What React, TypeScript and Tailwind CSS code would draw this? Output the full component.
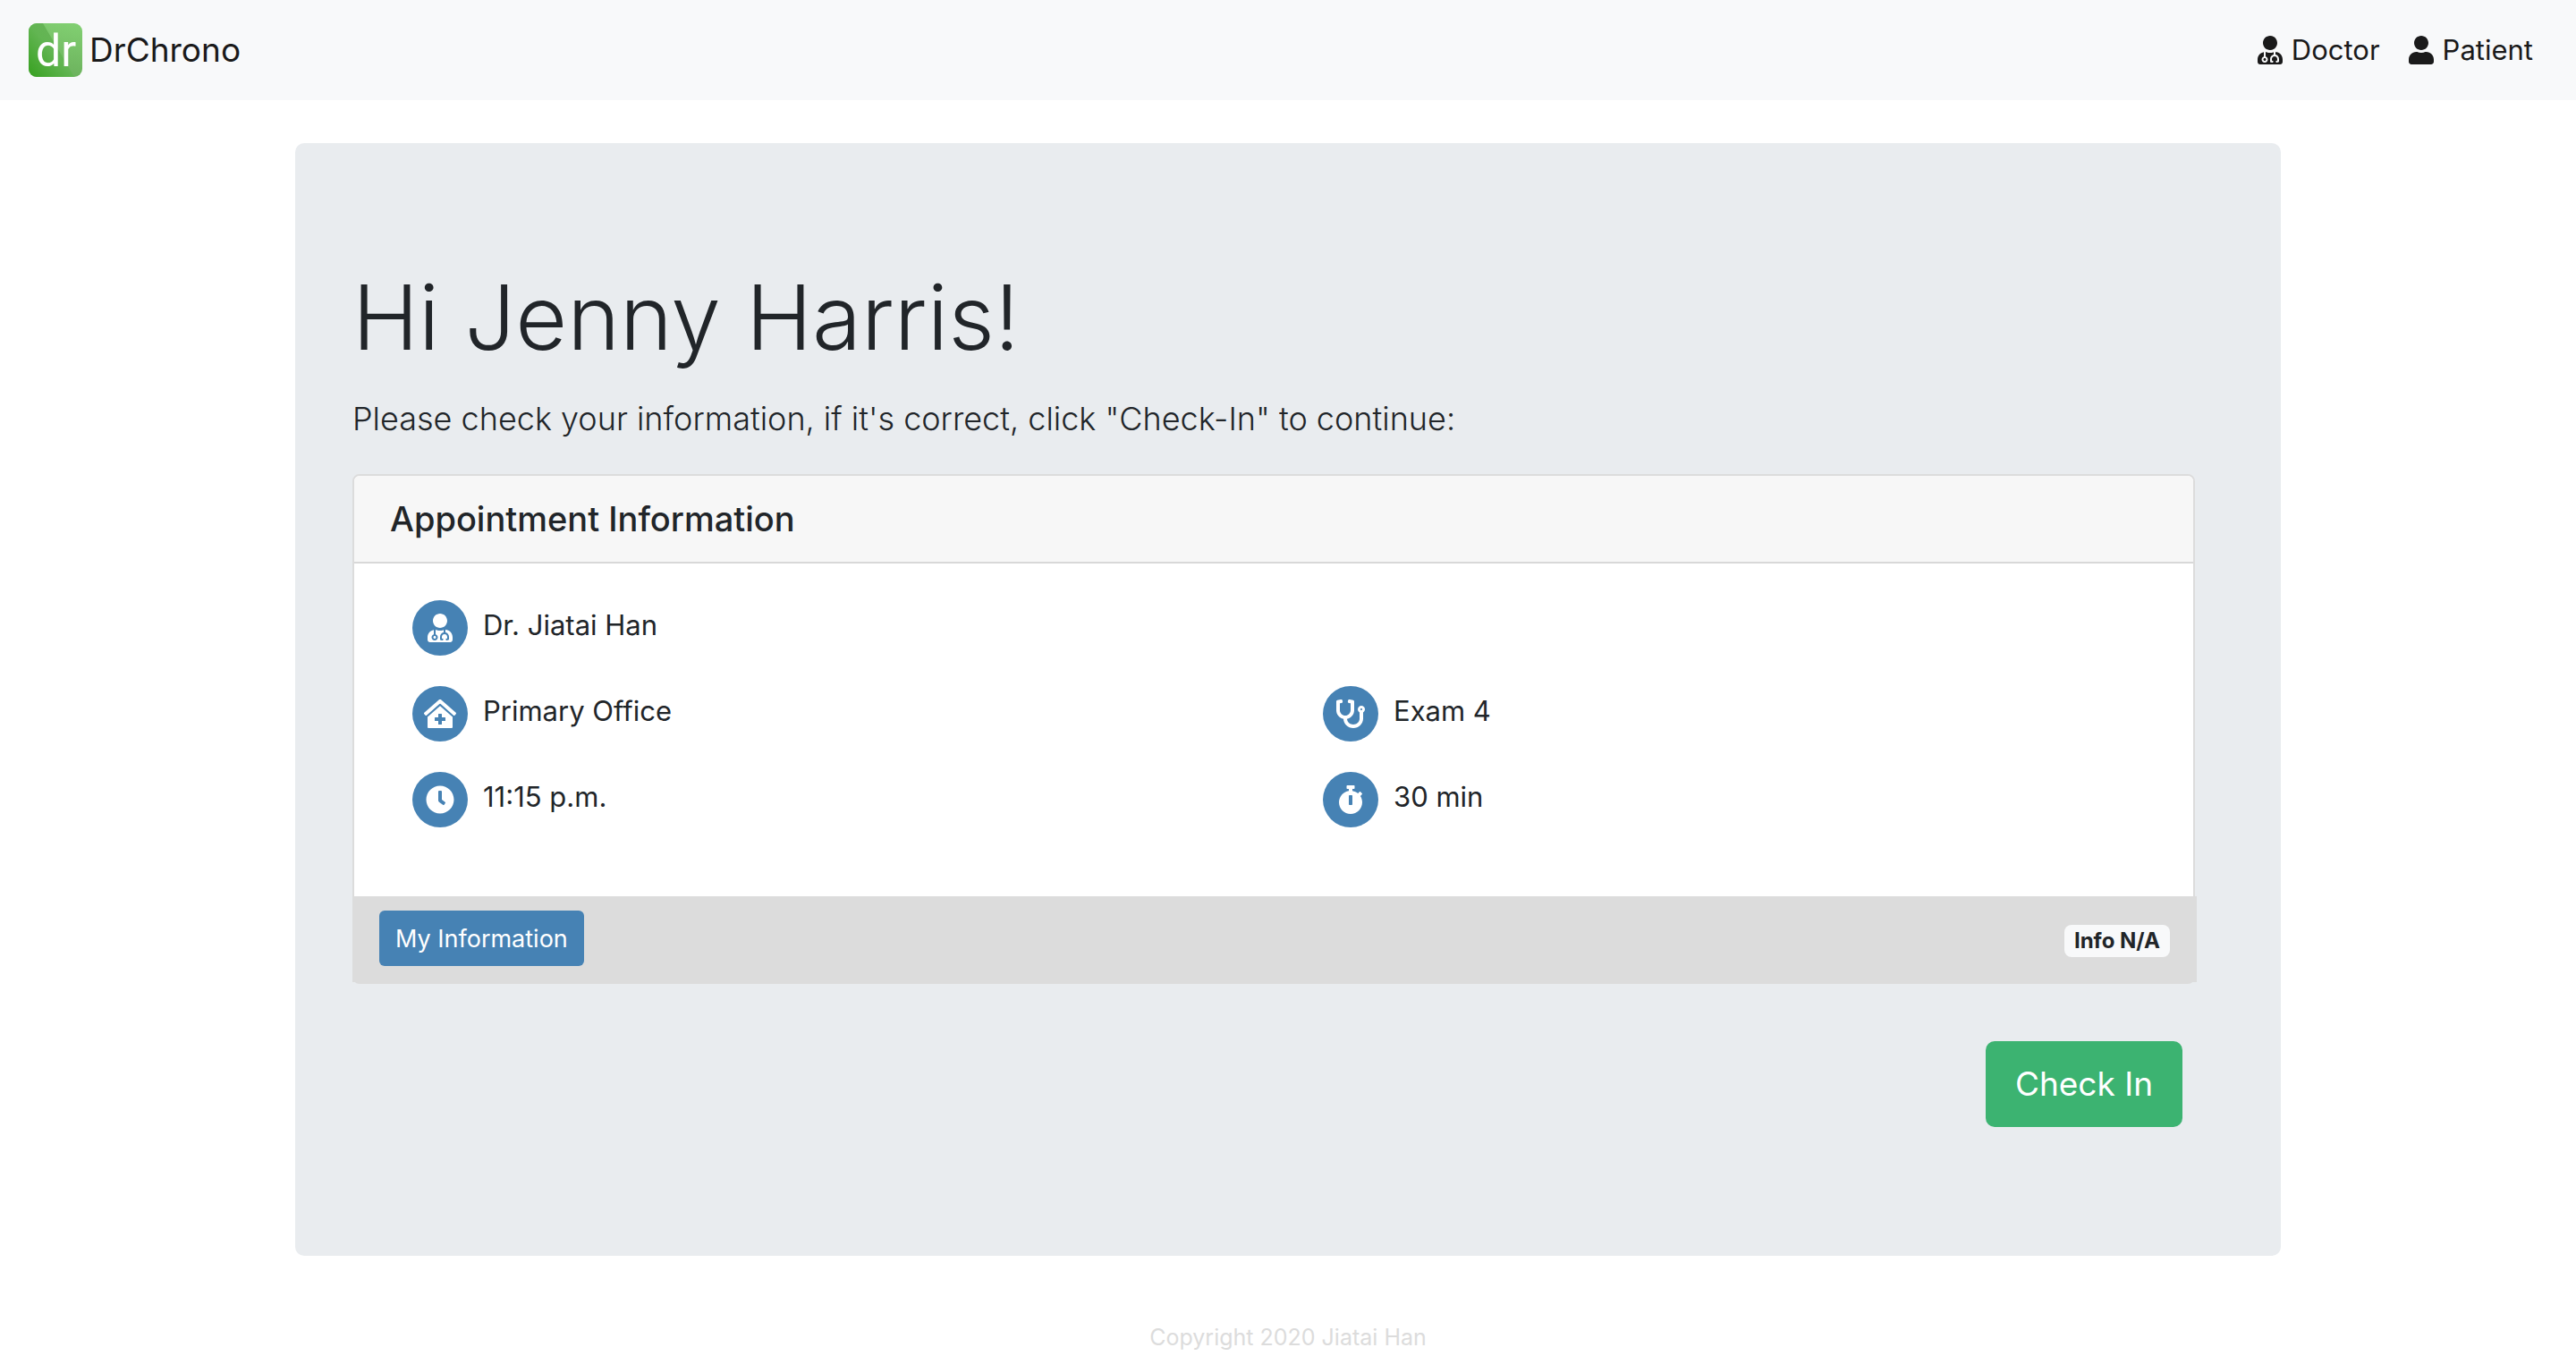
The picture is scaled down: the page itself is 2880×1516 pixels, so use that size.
import React from "react";
import type { ReactNode } from "react";
import { FaClinicMedical, FaClock, FaStethoscope, FaStopwatch, FaUser, FaUserMd } from "react-icons/fa";

function Logo() {
  return (
    <svg viewBox="0 0 60 60" className="size-[60px]" aria-hidden="true">
      <defs>
        <linearGradient id="logo-base" x1="0" y1="1" x2="1" y2="0">
          <stop offset="0" stopColor="#36a01f" />
          <stop offset="0.5" stopColor="#62b552" />
          <stop offset="1" stopColor="#6cb25d" />
        </linearGradient>
        <linearGradient id="logo-shine" x1="0.8" y1="1" x2="1" y2="0">
          <stop offset="0" stopColor="#6cb25d" />
          <stop offset="1" stopColor="#82d072" />
        </linearGradient>
        <clipPath id="logo-clip">
          <rect width="60" height="60" rx="9" />
        </clipPath>
      </defs>
      <g clipPath="url(#logo-clip)">
        <rect width="60" height="60" fill="url(#logo-shine)" />
        <path d="M0 0H16L51 60H0Z" fill="url(#logo-base)" />
      </g>
      <text x="8" y="48" fontSize="50" fontWeight="400" fill="#fff" className="font-['Roboto',sans-serif]">
        dr
      </text>
    </svg>
  );
}

function NavLink({ icon, children }: { icon: ReactNode; children: ReactNode }) {
  return (
    <a href="#" className="flex items-center gap-[10px] text-[31px] leading-[48px] text-[#1a1a1a]">
      {icon}
      <span>{children}</span>
    </a>
  );
}

function Detail({ icon, className = "", children }: { icon: ReactNode; className?: string; children: ReactNode }) {
  return (
    <li className={`flex items-start gap-[17px] pl-[55px] ${className}`}>
      <span className="flex size-[62px] shrink-0 items-center justify-center rounded-full bg-[#4682b4] text-white">
        {icon}
      </span>
      <span className="text-[31px] leading-[56px]">{children}</span>
    </li>
  );
}

export default function App() {
  return (
    <div className="flex min-h-screen flex-col bg-white font-['Inter',sans-serif] text-[#212529]">
      <header className="flex h-28 items-center justify-between bg-[#f8f9fa] pr-12 pl-8">
        <a href="#" className="flex items-center gap-2 text-[37px] leading-[60px] text-[#1a1a1a]">
          <Logo />
          <span>DrChrono</span>
        </a>
        <nav className="flex items-center gap-8">
          <NavLink icon={<FaUserMd className="h-8 w-7" />}>Doctor</NavLink>
          <NavLink icon={<FaUser className="h-8 w-7" />}>Patient</NavLink>
        </nav>
      </header>

      <main className="mx-auto mt-12 w-full max-w-[2220px] rounded-[10px] bg-[#e9ecef] pt-32 pr-24 pb-36 pl-16">
        <h1 className="mb-4 text-[100px] leading-[134px] font-light">Hi Jenny Harris!</h1>
        <p className="mb-8 text-[36px] leading-[60px] font-light">
          Please check your information, if it's correct, click "Check-In" to continue:
        </p>

        <section className="rounded-lg border-2 border-[#dcdcdc] bg-white">
          <h2 className="rounded-t-md border-b-2 border-[#d8d8d8] bg-[#f7f7f7] px-10 py-6 text-[38px] leading-[48px] font-medium">
            Appointment Information
          </h2>
          <ul className="grid grid-cols-2 gap-y-[34px] px-[10px] pt-[41px] pb-[77px]">
            <Detail className="col-span-2" icon={<FaUserMd className="h-8 w-7" />}>
              Dr. Jiatai Han
            </Detail>
            <Detail icon={<FaClinicMedical className="h-8 w-9" />}>Primary Office</Detail>
            <Detail icon={<FaStethoscope className="size-8" />}>Exam 4</Detail>
            <Detail icon={<FaClock className="size-8" />}>11:15 p.m.</Detail>
            <Detail icon={<FaStopwatch className="h-8 w-7" />}>30 min</Detail>
          </ul>
          <div className="-mr-1 -ml-0.5 flex items-start justify-between bg-[#dcdcdc] px-[30px] pt-4 pb-[18px]">
            <button
              type="button"
              className="h-[62px] rounded-md bg-[#4682b4] px-[18px] pt-0.5 text-[27px] leading-[42px] text-white"
            >
              My Information
            </button>
            <span className="mt-4 rounded-lg bg-[#f8f9fa] px-[11px] text-[24px] leading-9 font-bold">Info N/A</span>
          </div>
        </section>

        <div className="mt-16 flex justify-end pr-[14px]">
          <button
            type="button"
            className="h-24 rounded-[10px] bg-[#3cb371] px-[33px] text-[37px] leading-[60px] text-white"
          >
            Check In
          </button>
        </div>
      </main>

      <footer className="mt-[72px] text-center text-[25px] leading-[38px] text-[#dcdcdc]">
        Copyright 2020 Jiatai Han
      </footer>
    </div>
  );
}
